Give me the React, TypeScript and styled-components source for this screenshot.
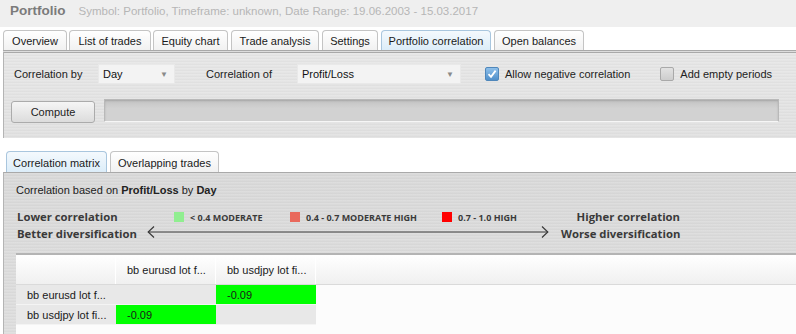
import React from "react";
import styled, { createGlobalStyle } from "styled-components";

const Global = createGlobalStyle`
  html, body { margin: 0; padding: 0; background: #ffffff; }
  body { font-family: "Liberation Sans", Arial, sans-serif; font-size: 11px; color: #222; width: 796px; height: 334px; overflow: hidden; }
  * { box-sizing: border-box; }
`;

const Page = styled.div`
  display: flex;
  flex-direction: column;
  width: 796px;
  height: 334px;
  overflow: hidden;
`;

const Header = styled.div`
  height: 27px;
  background: #efefef;
  display: flex;
  align-items: baseline;
  padding: 3px 0 0 10px;
  gap: 13px;
`;

const Title = styled.span`
  font-size: 13.5px;
  font-weight: 700;
  color: #7b7b7b;
  line-height: 16px;
`;

const Subtitle = styled.span`
  font-size: 11.5px;
  color: #b6b6b6;
`;

const TabBar = styled.div<{ $h: number; $pl: number }>`
  height: ${(p) => p.$h}px;
  background: #fff;
  display: flex;
  align-items: flex-end;
  padding-left: ${(p) => p.$pl}px;
`;

const Tab = styled.div<{ $active?: boolean; $w: number; $h: number; $mr: number }>`
  width: ${(p) => p.$w}px;
  height: ${(p) => p.$h}px;
  margin-right: ${(p) => p.$mr}px;
  display: flex;
  align-items: center;
  justify-content: center;
  font-size: 11px;
  color: #1a1a1a;
  border: 1px solid ${(p) => (p.$active ? "#a9c6de" : "#c4c4c4")};
  border-bottom: none;
  border-radius: 4px 4px 0 0;
  background: ${(p) =>
    p.$active
      ? "linear-gradient(#f4f9fd, #dcedf9)"
      : "linear-gradient(#ffffff, #f1f1f1)"};
  padding-top: 1px;
`;

const brushed = (top: string, bottom: string) => `
  background:
    repeating-linear-gradient(180deg, rgba(255,255,255,0.10) 0px, rgba(255,255,255,0.10) 1px, rgba(0,0,0,0.0) 1px, rgba(0,0,0,0.0) 2px, rgba(0,0,0,0.02) 2px, rgba(0,0,0,0.02) 3px),
    linear-gradient(${top}, ${bottom});
`;

const OuterPanel = styled.div`
  margin-left: 3px;
  height: 88px;
  border-top: 3px double #a9a9a9;
  border-left: 1px solid #b4b4b4;
  ${brushed("#e6e6e6", "#e1e1e1")}
  display: flex;
  flex-direction: column;
  padding: 11px 0 0 10px;
`;

const Row = styled.div<{ $mt?: number }>`
  display: flex;
  align-items: center;
  margin-top: ${(p) => p.$mt ?? 0}px;
`;

const Label = styled.span<{ $w: number }>`
  width: ${(p) => p.$w}px;
  color: #222;
`;

const Select = styled.div<{ $w: number; $mr: number }>`
  width: ${(p) => p.$w}px;
  height: 20px;
  margin-right: ${(p) => p.$mr}px;
  background: #f3f3f3;
  border: 1px solid #e9e9e9;
  display: flex;
  align-items: center;
  justify-content: space-between;
  padding: 0 6px 0 4px;
  font-size: 11px;
  color: #111;
`;

const Arrow = styled.span`
  font-size: 8px;
  color: #8a8a8a;
`;

const CheckLabel = styled.label<{ $mr: number }>`
  display: flex;
  align-items: center;
  gap: 6px;
  margin-right: ${(p) => p.$mr}px;
  font-size: 11px;
  color: #222;
`;

const Box = styled.span<{ $checked?: boolean }>`
  width: 14px;
  height: 14px;
  border-radius: 2px;
  display: inline-flex;
  align-items: center;
  justify-content: center;
  border: 1px solid ${(p) => (p.$checked ? "#4f87bb" : "#a9a9a9")};
  background: ${(p) =>
    p.$checked ? "linear-gradient(#8fc0ea, #4f8fca)" : "linear-gradient(#e2e2e2, #cdcdcd)"};
`;

const Button = styled.div`
  width: 84px;
  height: 22px;
  margin-top: 3px;
  margin-left: -3px;
  border: 1px solid #ababab;
  border-radius: 3px;
  background: linear-gradient(#f5f5f5, #dcdcdc);
  display: flex;
  align-items: center;
  justify-content: center;
  font-size: 11px;
  color: #222;
`;

const Progress = styled.div`
  width: 675px;
  height: 23px;
  margin-left: 9px;
  border: 1px solid #b9b9b9;
  border-bottom: 1px solid #f6f6f6;
  background: linear-gradient(#c3c3c3, #d2d2d2 40%, #d2d2d2);
  box-shadow: inset 0 1px 2px rgba(0, 0, 0, 0.15);
`;

const InnerPanel = styled.div`
  margin-left: 3px;
  flex: 1;
  border-top: 1px solid #a9a9a9;
  border-left: 1px solid #b4b4b4;
  ${brushed("#d9d9d9", "#dedede")}
  display: flex;
  flex-direction: column;
`;

const Caption = styled.div`
  padding: 11px 0 0 12px;
  height: 35px;
  font-size: 11px;
  color: #222;
  b { font-weight: 700; }
`;

const Legend = styled.div`
  display: flex;
  align-items: flex-start;
  padding-left: 13px;
  height: 45px;
`;

const SideText = styled.div<{ $w: number; $right?: boolean }>`
  width: ${(p) => p.$w}px;
  text-align: ${(p) => (p.$right ? "right" : "left")};
  font-family: "Open Sans", "Noto Sans", sans-serif;
  font-weight: 700;
  font-size: 11.3px;
  line-height: 16.5px;
  padding-top: 1px;
  color: #3a3a3a;
  white-space: nowrap;
`;

const Middle = styled.div`
  width: 402px;
  margin: 0 12px;
  display: flex;
  flex-direction: column;
`;

const Swatches = styled.div`
  display: flex;
  align-items: center;
  padding: 1px 0 0 27px;
  height: 17px;
`;

const Swatch = styled.span<{ $c: string; $w: number }>`
  display: flex;
  align-items: center;
  gap: 6px;
  width: ${(p) => p.$w}px;
  font-family: "Open Sans", "Noto Sans", sans-serif;
  font-weight: 700;
  font-size: 9px;
  color: #3a3a3a;
  white-space: nowrap;
  &::before {
    content: "";
    flex: none;
    width: 10px;
    height: 10px;
    background: ${(p) => p.$c};
  }
`;

const GridWrap = styled.div`
  margin-left: 12px;
  flex: 1;
  border-top: 2px solid #b4b4b4;
  background: #fcfcfc;
  display: flex;
  flex-direction: column;
`;

const GridRow = styled.div<{ $head?: boolean }>`
  display: flex;
  height: ${(p) => (p.$head ? 30 : 20)}px;
  ${(p) =>
    p.$head
      ? "background: linear-gradient(#ffffff, #f0f0f0); border-bottom: 1px solid #dadada;"
      : ""}
`;

const Cell = styled.div<{ $bg?: string; $head?: boolean; $fill?: boolean }>`
  width: ${(p) => (p.$fill ? "auto" : "100px")};
  flex: ${(p) => (p.$fill ? 1 : "none")};
  background: ${(p) => p.$bg ?? "transparent"};
  border-right: ${(p) => (p.$head && !p.$fill ? "1px solid #ffffff" : "none")};
  border-bottom: ${(p) => (!p.$head && !p.$fill ? "1px solid #f4f4f4" : "none")};
  display: flex;
  align-items: center;
  padding-left: 11px;
  font-size: 11px;
  color: #1a1a1a;
  white-space: nowrap;
`;

const mainTabs: [string, number, number][] = [
  ["Overview", 64, 2],
  ["List of trades", 82, 2],
  ["Equity chart", 75, 3],
  ["Trade analysis", 88, 3],
  ["Settings", 56, 3],
  ["Portfolio correlation", 110, 3],
  ["Open balances", 90, 0],
];

const GRAY = "#e8e8e8";
const GREEN = "#00ff00";

const matrix = [
  { name: "bb eurusd lot f...", cells: [null, "-0.09"] },
  { name: "bb usdjpy lot fi...", cells: ["-0.09", null] },
];

export default function App() {
  return (
    <Page>
      <Global />
      <Header>
        <Title>Portfolio</Title>
        <Subtitle>Symbol: Portfolio, Timeframe: unknown, Date Range: 19.06.2003 - 15.03.2017</Subtitle>
      </Header>
      <TabBar $h={23} $pl={3}>
        {mainTabs.map(([t, w, mr]) => (
          <Tab key={t} $w={w} $h={20} $mr={mr} $active={t === "Portfolio correlation"}>
            {t}
          </Tab>
        ))}
      </TabBar>
      <OuterPanel>
        <Row>
          <Label $w={84}>Correlation by</Label>
          <Select $w={77} $mr={31}>
            <span>Day</span>
            <Arrow>▼</Arrow>
          </Select>
          <Label $w={91}>Correlation of</Label>
          <Select $w={164} $mr={24}>
            <span>Profit/Loss</span>
            <Arrow>▼</Arrow>
          </Select>
          <CheckLabel $mr={30}>
            <Box $checked>
              <svg width="10" height="10" viewBox="0 0 10 10">
                <path d="M1.5 5.2 L4 7.8 L8.6 1.6" fill="none" stroke="#fff" strokeWidth="1.8" />
              </svg>
            </Box>
            Allow negative correlation
          </CheckLabel>
          <CheckLabel $mr={0}>
            <Box />
            Add empty periods
          </CheckLabel>
        </Row>
        <Row $mt={14}>
          <Button>Compute</Button>
          <Progress />
        </Row>
      </OuterPanel>
      <TabBar $h={34} $pl={6}>
        <Tab $w={101} $h={21} $mr={3} $active>
          Correlation matrix
        </Tab>
        <Tab $w={109} $h={21} $mr={0}>
          Overlapping trades
        </Tab>
      </TabBar>
      <InnerPanel>
        <Caption>
          Correlation based on <b>Profit/Loss</b> by <b>Day</b>
        </Caption>
        <Legend>
          <SideText $w={118}>
            Lower correlation
            <br />
            Better diversification
          </SideText>
          <Middle>
            <Swatches>
              <Swatch $c="#90ee90" $w={116}>
                &lt; 0.4 MODERATE
              </Swatch>
              <Swatch $c="#e9695c" $w={152}>
                0.4 - 0.7 MODERATE HIGH
              </Swatch>
              <Swatch $c="#ff0000" $w={100}>
                0.7 - 1.0 HIGH
              </Swatch>
            </Swatches>
            <svg width="402" height="14" viewBox="0 0 402 14">
              <line x1="1" y1="7" x2="401" y2="7" stroke="#3a3a3a" strokeWidth="1" />
              <path d="M7 1.5 L1.2 7 L7 12.5" fill="none" stroke="#3a3a3a" strokeWidth="1.2" />
              <path d="M395 1.5 L400.8 7 L395 12.5" fill="none" stroke="#3a3a3a" strokeWidth="1.2" />
            </svg>
          </Middle>
          <SideText $w={119} $right>
            Higher correlation
            <br />
            Worse diversification
          </SideText>
        </Legend>
        <GridWrap>
          <GridRow $head>
            <Cell $head />
            <Cell $head>bb eurusd lot f...</Cell>
            <Cell $head>bb usdjpy lot fi...</Cell>
            <Cell $head $fill />
          </GridRow>
          {matrix.map((r) => (
            <GridRow key={r.name}>
              <Cell $bg={GRAY}>{r.name}</Cell>
              {r.cells.map((v, i) => (
                <Cell key={i} $bg={v ? GREEN : GRAY}>
                  {v ?? ""}
                </Cell>
              ))}
              <Cell $fill />
            </GridRow>
          ))}
        </GridWrap>
      </InnerPanel>
    </Page>
  );
}
